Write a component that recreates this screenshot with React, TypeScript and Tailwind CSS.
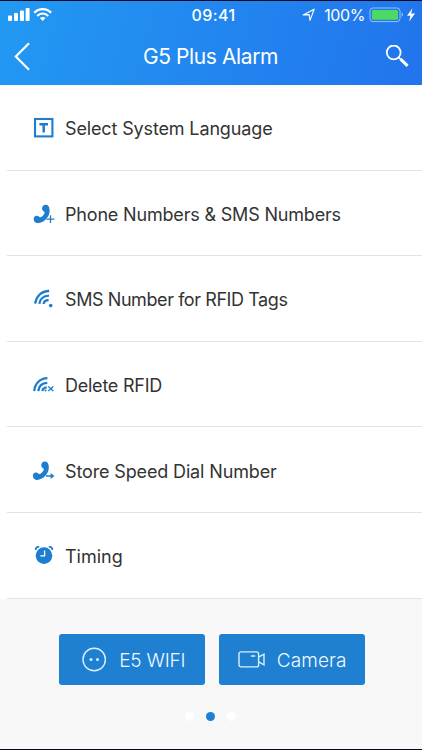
import type { ReactNode } from 'react';

type MenuItem = {
    label: string;
    icon: ReactNode;
    /** Letter spacing of this label. */
    text: string;
};

const HANDSET =
    'M10.6 4.5C11.6 2.3 16 1.8 17.1 5.3C18.5 10 17 14.2 14.2 17C11.6 19.8 8 21.5 5 21.1C2.3 20.7 1 17.3 2.1 15.2C3.1 13.4 5.7 13.2 7.2 14.7C8.4 15.8 9 15.3 10.2 14.2C11.8 12.7 13 11 12.5 9.9C12 9.2 10.9 9.2 10.3 7.7C9.9 6.5 10.1 5.3 10.6 4.5Z';

function Glyph({ children }: { children: ReactNode }) {
    return (
        <svg width="24" height="24" viewBox="0 0 24 24" fill="none" stroke="#1e7dcf" className="shrink-0">
            {children}
        </svg>
    );
}

const items: MenuItem[] = [
    {
        label: 'Select System Language',
        text: 'tracking-[-0.14px]',
        icon: (
            <Glyph>
                <rect x="3" y="3" width="17.4" height="17.4" strokeWidth="2.1" />
                <path d="M7.4 8.2H16M11.7 8.2V16.4" strokeWidth="2.5" />
            </Glyph>
        ),
    },
    {
        label: 'Phone Numbers & SMS Numbers',
        text: 'tracking-[-0.18px]',
        icon: (
            <Glyph>
                <path d={HANDSET} fill="#1e7dcf" stroke="none" />
                <path d="M14.6 17.1H22.4M18.5 13.2V21" strokeWidth="1.3" />
            </Glyph>
        ),
    },
    {
        label: 'SMS Number for RFID Tags',
        text: 'tracking-[-0.42px]',
        icon: (
            <Glyph>
                <path d="M3.2 16.6C4 9.5 9 4.2 17.2 4" strokeWidth="2.3" />
                <path d="M7.4 16.8C7.8 12.2 11.4 8.8 17 8.6" strokeWidth="2.3" />
                <path d="M11.6 17C11.8 14.8 13.6 13.2 16.6 13" strokeWidth="2.3" />
                <circle cx="18.7" cy="18.6" r="1.8" fill="#1e7dcf" stroke="none" />
            </Glyph>
        ),
    },
    {
        label: 'Delete RFID',
        text: 'tracking-[-0.24px]',
        icon: (
            <Glyph>
                <path d="M2.2 18.2C2.8 10.8 7.6 5.4 15.4 5.1" strokeWidth="2.3" />
                <path d="M6.3 18.2C6.7 13.6 9.8 10.2 15.3 9.9" strokeWidth="2.3" />
                <path d="M10.4 18.2C10.6 16 12.2 14.6 14.8 14.4" strokeWidth="2.3" />
                <circle cx="13.6" cy="17.6" r="1" fill="#1e7dcf" stroke="none" />
                <path d="M16.3 13.5L21.3 18.1M21.3 13.5L16.3 18.1" strokeWidth="1.4" />
            </Glyph>
        ),
    },
    {
        label: 'Store Speed Dial Number',
        text: 'tracking-[-0.14px]',
        icon: (
            <Glyph>
                <path d={HANDSET} transform="translate(-0.8 -0.2)" fill="#1e7dcf" stroke="none" />
                <path d="M14 17H20" strokeWidth="1.5" />
                <path d="M18.6 13.9L22.5 17L18.6 20.1Z" fill="#1e7dcf" stroke="none" />
            </Glyph>
        ),
    },
    {
        label: 'Timing',
        text: 'tracking-[0px]',
        icon: (
            <Glyph>
                <circle cx="12" cy="11.6" r="8.3" fill="#1e7dcf" stroke="none" />
                <path d="M3.8 6C3.4 3.8 5 2.5 7.2 2.9M16.8 2.9C19 2.5 20.6 3.8 20.2 6" strokeWidth="1.8" />
                <path d="M12.6 6.5V11.9H8.4" stroke="#fff" strokeWidth="1.3" />
            </Glyph>
        ),
    },
];

function StatusBar() {
    return (
        <div className="grid h-[27px] grid-cols-[1fr_auto_1fr] items-center pr-[6px] pl-2">
            <svg width="46" height="16" viewBox="0 0 46 16" fill="#fff">
                <rect x="0" y="8.5" width="4" height="5.5" rx="1" />
                <rect x="6" y="6" width="4" height="8" rx="1" />
                <rect x="12" y="3.5" width="4" height="10.5" rx="1" />
                <rect x="17.6" y="1" width="4" height="13" rx="1" />
                <g fill="none" stroke="#fff" strokeWidth="2.2">
                    <path d="M26.2 5.8C31 0.9 38.4 0.9 43.2 5.8" />
                    <path d="M29.2 8.9C32.3 5.7 37.1 5.7 40.2 8.9" />
                </g>
                <path d="M31.9 11C33.5 9.5 35.9 9.5 37.5 11L34.7 14.1Z" />
            </svg>
            <span className="ml-[3px] pt-px text-[16px] leading-none font-medium tracking-[0.4px]">09:41</span>
            <div className="flex items-center justify-end">
                <svg width="13" height="14" viewBox="0 0 13 14" fill="none" stroke="#fff" strokeWidth="1.1">
                    <path d="M1.2 7L12.2 1.2L8 12.4L7.2 6.6Z" strokeLinejoin="round" />
                </svg>
                <span className="ml-[9px] pt-px text-[16px] leading-none tracking-[-0.4px]">100%</span>
                <svg width="47" height="16" viewBox="0 0 47 16" className="ml-1">
                    <rect x="1" y="1" width="30" height="13.6" rx="3" fill="none" stroke="#8fc4ff" />
                    <rect x="3" y="3" width="26" height="9.7" rx="1.3" fill="#4cd964" />
                    <path d="M32.6 5.6C34.4 6.2 34.4 9.4 32.6 10Z" fill="#8fc4ff" />
                    <path d="M43.4 1.2L38 8.8H41.4L40.2 14.4L46 6.6H42.2Z" fill="#fff" />
                </svg>
            </div>
        </div>
    );
}

function NavBar() {
    return (
        <div className="flex h-[57px] items-center justify-between pr-[13px] pl-[13px]">
            <svg width="18" height="30" viewBox="0 0 18 30" fill="none" stroke="#fff" strokeWidth="2.2">
                <path d="M16 1.2L2.8 14.5L16 27.8" />
            </svg>
            <h1 className="ml-[5px] text-[21px] leading-none font-normal tracking-[-0.4px]">G5 Plus Alarm</h1>
            <svg width="24" height="24" viewBox="0 0 24 24" fill="none" stroke="#fff">
                <circle cx="8.7" cy="7.4" r="6.9" strokeWidth="1.8" />
                <path d="M13.4 12.2L16 14.7" strokeWidth="1.6" />
                <path d="M15.6 14.2L22.6 20.9" strokeWidth="3" />
            </svg>
        </div>
    );
}

function ActionButton({ label, icon, className }: { label: string; icon: ReactNode; className: string }) {
    return (
        <button
            type="button"
            className={`flex h-[51px] w-[146px] items-center rounded-[3px] bg-[#1f7fd1] leading-none font-light text-[#effaff] ${className}`}
        >
            {icon}
            <span className="pt-0.5">{label}</span>
        </button>
    );
}

export default function App() {
    return (
        <div className="flex h-[750px] w-[422px] flex-col overflow-hidden border-y border-[#080820] bg-white font-['Inter','Liberation_Sans',sans-serif]">
            <header className="h-[84px] shrink-0 bg-linear-[105deg] from-[#2299f3] to-[#2274ec] text-white">
                <StatusBar />
                <NavBar />
            </header>

            <ul className="h-[514px] shrink-0">
                {items.map((item) => (
                    <li key={item.label} className="ml-[7px] h-[85.6px] border-b border-[#e3e3e3]">
                        <div className="flex h-full items-center gap-[9px] pt-[2px] pl-[25px]">
                            {item.icon}
                            <span className={`pt-[2px] text-[18px] leading-6 whitespace-nowrap text-[#333] ${item.text}`}>
                                {item.label}
                            </span>
                        </div>
                    </li>
                ))}
            </ul>

            <footer className="flex grow flex-col items-center bg-[#f8f8f8] pt-[35px]">
                <div className="ml-[2px] flex gap-[13.5px]">
                    <ActionButton
                        label="E5 WIFI"
                        className="gap-[12px] pl-[22px] text-[19px] tracking-[-0.2px]"
                        icon={
                            <svg width="26" height="26" viewBox="0 0 26 26" fill="none" stroke="#d9f0ff">
                                <circle cx="13.2" cy="12.5" r="11.2" strokeWidth="1.4" />
                                <circle cx="10" cy="12.5" r="1.5" fill="#d9f0ff" stroke="none" />
                                <circle cx="16.5" cy="12.5" r="1.5" fill="#d9f0ff" stroke="none" />
                            </svg>
                        }
                    />
                    <ActionButton
                        label="Camera"
                        className="gap-[11px] pl-[19px] text-[19px] tracking-[0.1px]"
                        icon={
                            <svg width="28" height="18" viewBox="0 0 28 18" fill="none" stroke="#d9f0ff" strokeWidth="1.4">
                                <rect x="1" y="0.9" width="19.6" height="15" rx="2" />
                                <path d="M20.6 6.2L26 3.2V13.8L20.6 10.8M13 5H17.2" />
                            </svg>
                        }
                    />
                </div>
                <div className="mt-[27px] mr-px flex gap-3">
                    <span className="size-[9px] rounded-full bg-white" />
                    <span className="size-[9px] rounded-full bg-[#1f7fd1]" />
                    <span className="size-[9px] rounded-full bg-white" />
                </div>
            </footer>
        </div>
    );
}
